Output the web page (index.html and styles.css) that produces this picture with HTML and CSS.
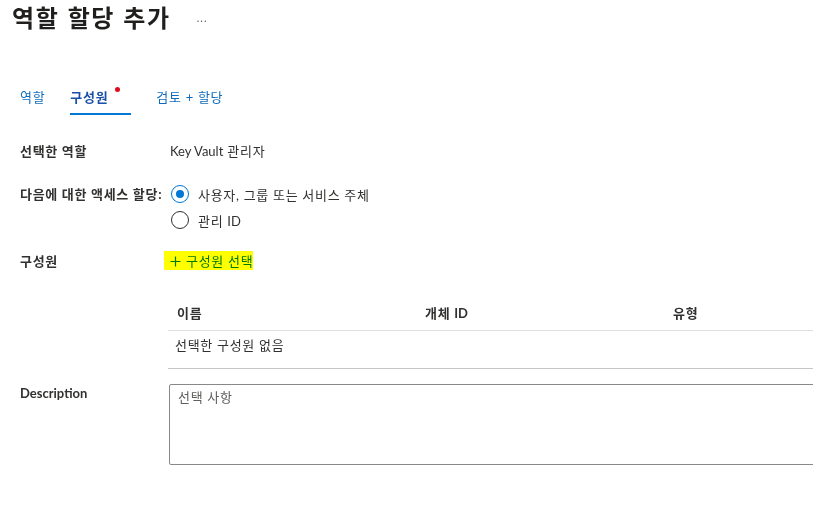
FILE: index.html
```html
<!DOCTYPE html>
<html lang="ko">
<head>
<meta charset="utf-8">
<link rel="stylesheet" href="styles.css">
</head>
<body>
<div class="page">
  <header class="title-bar">
    <h1 class="title">역할 할당 추가</h1>
    <span class="more">...</span>
  </header>

  <nav class="tabs">
    <span class="tab">역할</span>
    <span class="tab tab-active">구성원<span class="dot"></span></span>
    <span class="tab">검토 + 할당</span>
  </nav>

  <section class="form">
    <div class="row row-role">
      <div class="label">선택한 역할</div>
      <div class="value"><span class="latin">Key Vault</span> 관리자</div>
    </div>

    <div class="row row-access">
      <div class="label label-tall">다음에 대한 액세스 할당:</div>
      <div class="radios">
        <div class="radio-opt"><span class="radio radio-on"></span><span>사용자, 그룹 또는 서비스 주체</span></div>
        <div class="radio-opt"><span class="radio"></span><span>관리 <span class="latin">ID</span></span></div>
      </div>
    </div>

    <div class="row row-members">
      <div class="label">구성원</div>
      <div class="value">
        <span class="add-link">
          <svg class="plus" width="11" height="11" viewBox="0 0 11 11"><path d="M5.5 0.5v10M0.5 5.5h10" stroke="currentColor" stroke-width="1.2" fill="none"/></svg>
          <span>구성원 선택</span>
          <span class="hl"></span>
        </span>
      </div>
    </div>

    <div class="table">
      <div class="thead">
        <div class="cell">이름</div>
        <div class="cell">개체 <span class="latin">ID</span></div>
        <div class="cell">유형</div>
      </div>
      <div class="tbody">
        <div class="cell">선택한 구성원 없음</div>
      </div>
    </div>

    <div class="row row-desc">
      <div class="label latin">Description</div>
      <div class="textarea"><span class="placeholder">선택 사항</span></div>
    </div>
  </section>
</div>
</body>
</html>
```

FILE: styles.css
```css
html, body {
  margin: 0;
  padding: 0;
  background: #ffffff;
  overflow: hidden;
}
body {
  font-family: Lato, "Noto Sans CJK KR", sans-serif;
  font-size: 13px;
  letter-spacing: 0.7px;
  color: #323130;
  width: 813px;
  height: 510px;
}
.latin {
  letter-spacing: 0;
}
.page {
  padding-top: 1px;
  overflow: hidden;
}
.title-bar {
  display: flex;
  align-items: center;
  padding-left: 12px;
  height: 32px;
}
.title {
  margin: 0;
  font-family: "Noto Sans CJK KR", sans-serif;
  font-size: 24px;
  font-weight: 600;
  line-height: 32px;
  letter-spacing: 1.6px;
  color: #201f1e;
}
.more {
  margin-left: 26px;
  font-size: 11px;
  color: #605e5c;
  letter-spacing: 1px;
  line-height: 32px;
  position: relative;
  top: 1px;
}
.tabs {
  display: flex;
  gap: 25px;
  margin-top: 54px;
  padding-left: 20px;
}
.tab {
  line-height: 20px;
  padding-bottom: 6px;
  border-bottom: 2px solid transparent;
  color: #0f6cbd;
  display: flex;
}
.tab-active {
  font-weight: 700;
  color: #1b4fa8;
  border-bottom-color: #0078d4;
}
.dot {
  width: 5px;
  height: 5px;
  border-radius: 50%;
  background: #e00b1c;
  margin-left: 7px;
  margin-right: 11px;
  margin-top: 0px;
}
.form {
  padding-left: 20px;
}
.row {
  display: flex;
  align-items: flex-start;
}
.label {
  width: 150px;
  flex: none;
  line-height: 20px;
  font-weight: 700;
  color: #323130;
}
.label-tall {
  line-height: 26px;
}
.value {
  line-height: 20px;
}
.row-role {
  margin-top: 26px;
}
.row-access {
  margin-top: 20px;
}
.radios {
  display: flex;
  flex-direction: column;
}
.radio-opt {
  display: flex;
  align-items: center;
  height: 26px;
  gap: 9px;
}
.radio {
  width: 16px;
  height: 16px;
  border: 1px solid #323130;
  border-radius: 50%;
  margin-left: 1px;
  display: flex;
  align-items: center;
  justify-content: center;
  box-sizing: content-box;
}
.radio-on {
  border-color: #0078d4;
}
.radio-on::after {
  content: "";
  width: 8px;
  height: 8px;
  border-radius: 50%;
  background: #0078d4;
}
.row-members {
  margin-top: 18px;
}
.add-link {
  position: relative;
  display: inline-flex;
  align-items: center;
  gap: 5px;
  color: #0078d4;
}
.plus {
  display: block;
}
.hl {
  position: absolute;
  left: -6px;
  top: 0;
  width: 89px;
  height: 19px;
  background: #ffff00;
  mix-blend-mode: multiply;
}
.table {
  margin-left: 148px;
  margin-top: 25px;
  width: 760px;
}
.thead {
  display: grid;
  grid-template-columns: 248px 248px 1fr;
  height: 33px;
  align-items: center;
  border-bottom: 1px solid #e1dfdd;
  font-weight: 700;
}
.thead .cell {
  padding-left: 9px;
  line-height: 20px;
}
.tbody {
  border-bottom: 1px solid #c8c6c4;
  padding: 4px 0 13px 7px;
  line-height: 20px;
}
.row-desc {
  margin-top: 15px;
}
.row-desc .label {
  margin-top: -1px;
}
.textarea {
  flex: none;
  margin-left: -1px;
  width: 700px;
  height: 81px;
  border: 1px solid #8a8886;
  border-radius: 2px;
  padding: 2px 8px;
  box-sizing: border-box;
  line-height: 20px;
  color: #605e5c;
}
```
